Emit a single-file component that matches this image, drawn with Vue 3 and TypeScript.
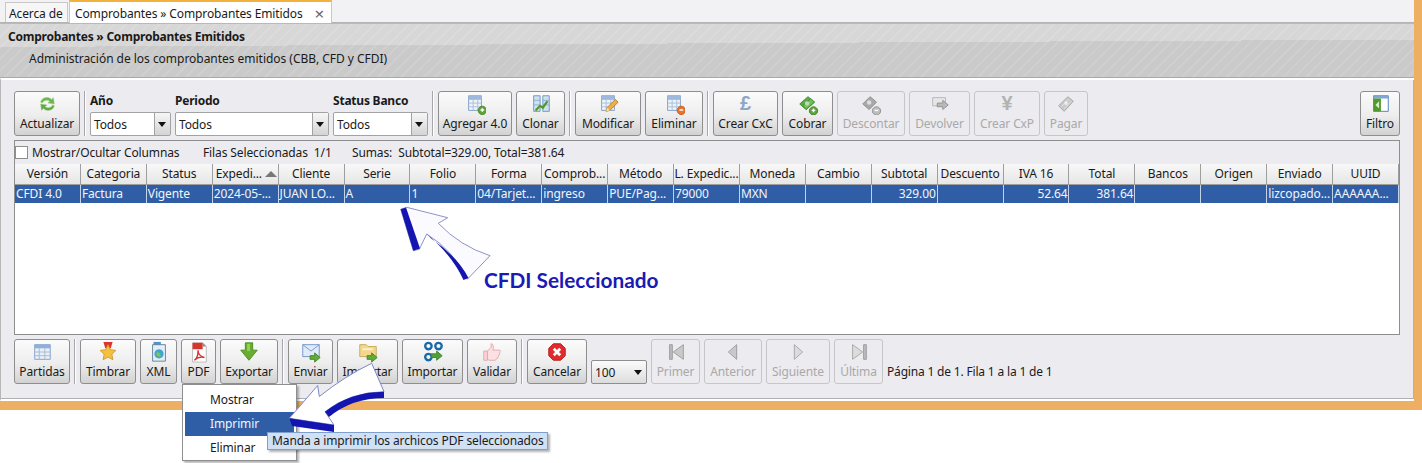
<script setup lang="ts">
interface Shape {
  d: string
  f?: string
  s?: string
  w?: number
}
interface Btn {
  label: string
  w: number
  icon?: string
  glyph?: string
  off?: boolean
}
type Item = Btn | { sep: true } | { field: string; w: number }

const table = 'M5 3h14v16H5z'
const grid = 'M5 7h14M5 11h14M5 15h14M10 7v12M15 7v12'
const tableShapes: Shape[] = [
  { d: table, f: '#eef3fa', s: '#7f9cc4' },
  { d: 'M5 3h14v4H5z', f: '#9db9dd' },
  { d: grid, s: '#a9bdd8' }
]

const icons: Record<string, Shape[]> = {
  refresh: [
    { d: 'M5 10c1-5 8-7 12-3l2-2 1 7-7-1 2-2c-3-2-7-1-8 2z', f: '#6cb552', s: '#9bd083', w: 0.5 },
    { d: 'M20 14c-1 5-8 7-12 3l-2 2-1-7 7 1-2 2c3 2 7 1 8-2z', f: '#5fa947', s: '#9bd083', w: 0.5 }
  ],
  add: [
    ...tableShapes,
    { d: 'M20 14.5a4.5 4.5 0 1 1-.01 0z', f: '#5ca53a', s: '#3f7f24' },
    { d: 'M20 16.5v4M18 18.5h4', s: '#fff', w: 1.5 }
  ],
  clone: [
    { d: 'M4 3h7v17H4z', f: '#cfe0f2', s: '#6c93c0' },
    { d: 'M14 3h7v17h-7z', f: '#cfe0f2', s: '#6c93c0' },
    { d: 'M4 8h7M4 13h7M14 8h7M14 13h7', s: '#8eaed0' },
    { d: 'M6 19l5-5 3 2 5-7', s: '#4f9a2f', w: 2.4 }
  ],
  edit: [
    ...tableShapes,
    { d: 'M10 20l1-4 9-9 3 3-9 9z', f: '#eeb044', s: '#b07c22' },
    { d: 'M10 20l1-4 3 3z', f: '#f7e3b8' }
  ],
  remove: [
    ...tableShapes,
    { d: 'M20 14.5a4.5 4.5 0 1 1-.01 0z', f: '#e8742c', s: '#bc5218' },
    { d: 'M18 18.5h4', s: '#fff', w: 1.6 }
  ],
  bills: [
    { d: 'M3 12l9-8 7 6-9 8z', f: '#5dab48', s: '#3f8530' },
    { d: 'M6 14l9-8 4 4-9 8z', f: '#74bd5d', s: '#3f8530' },
    { d: 'M11 9a2.4 2.4 0 1 1-.01 0z', f: '#b9e0a8' },
    { d: 'M18 15a4.5 4.5 0 1 1-.01 0z', f: '#5ca53a', s: '#3f7f24' },
    { d: 'M18 17v4M16 19h4', s: '#fff', w: 1.5 }
  ],
  billsOff: [
    { d: 'M3 12l8-8 7 6-8 8z', f: '#a8a8a8', s: '#8d8d8d' },
    { d: 'M10 8a2.4 2.4 0 1 1-.01 0z', f: '#dedede' },
    { d: 'M18 15a4.5 4.5 0 1 1-.01 0z', f: '#bdbdbd', s: '#8d8d8d' },
    { d: 'M16 19h4', s: '#fff', w: 1.5 }
  ],
  returnOff: [
    { d: 'M4 5h14v9H4z', f: '#e6e6e6', s: '#b5b5b5' },
    { d: 'M9 11h6V8l6 5-6 5v-3H9z', f: '#b9b9b9', s: '#8f8f8f' }
  ],
  payOff: [
    { d: 'M4 14L14 4l6 5-10 11z', f: '#c8c8c8', s: '#a5a5a5' },
    { d: 'M7 15L15 7M10 17l8-8', s: '#e6e6e6' },
    { d: 'M12 9a2 2 0 1 1-.01 0z', f: '#ededed' }
  ],
  filter: [
    { d: 'M5 3h16v17H5z', f: '#fff', s: '#4f7cb5' },
    { d: 'M5 3h16v3H5z', f: '#7fa6d4' },
    { d: 'M5 6h8v14H5z', f: '#4f9a2f' },
    { d: 'M11 9l-4 4 4 4z', f: '#d8f0c8' }
  ],
  parts: [
    { d: 'M4 4h17v16H4z', f: '#e9eff8', s: '#7f9fcc' },
    { d: 'M4 4h17v4H4z', f: '#8fb0dc' },
    { d: 'M4 12h17M4 16h17M9 8v12M15 8v12', s: '#aab8cc' }
  ],
  stamp: [
    { d: 'M7 1h10l-2 7H9z', f: '#e0322c' },
    { d: 'M12 4l2.6 5.5 6 .8-4.4 4.1 1.1 6-5.3-2.9-5.3 2.9 1.1-6-4.4-4.1 6-.8z', f: '#f5c13c', s: '#d79628' }
  ],
  xml: [
    { d: 'M6 1h8v4H6z', f: '#4f93d0' },
    { d: 'M5 4h14v18H5z', f: '#e4eef6', s: '#5f7f98' },
    { d: 'M12 9a5 5 0 1 1-.01 0z', f: '#3aa6d8' },
    { d: 'M9 13c2-2 5 1 5 4-3 1-5-1-5-4z', f: '#8cc43c' }
  ],
  pdf: [
    { d: 'M5 2h11l4 4v17H5z', f: '#fdfdfd', s: '#b9b9b9' },
    { d: 'M5 2h11v7H5z', f: '#d8342c' },
    { d: 'M16 2l4 4h-4z', f: '#8d8d8d' },
    { d: 'M7 21c3-2 4-7 4-11 0 5 3 7 7 8-4-1-8 0-11 3z', f: 'none', s: '#d8342c', w: 1.5 }
  ],
  down: [
    { d: 'M8 2h8v8h5l-9 11-9-11h5z', f: '#68ad30', s: '#4a8c22' },
    { d: 'M10 3h3v8h-3z', f: '#9ad05c' }
  ],
  send: [
    { d: 'M3 4h18v13H3z', f: '#dfeafa', s: '#6e93c8' },
    { d: 'M3 4l9 7 9-7', f: 'none', s: '#6e93c8' },
    { d: 'M11 16h5v-3l6 5-6 5v-3h-5z', f: '#62ad3a', s: '#3f8526' }
  ],
  folder: [
    { d: 'M3 4h7l2 2h9v11H3z', f: '#f3d78c', s: '#c8a858' },
    { d: 'M6 8h11v2H6z', f: '#fff3cf' },
    { d: 'M11 16h5v-3l6 5-6 5v-3h-5z', f: '#62ad3a', s: '#3f8526' }
  ],
  import: [
    { d: 'M7 2a3.5 3.5 0 1 1-.01 0zM18 2a3.5 3.5 0 1 1-.01 0zM7 14a3.5 3.5 0 1 1-.01 0z', f: 'none', s: '#1a6aa8', w: 2.6 },
    { d: 'M10 14h6v-3l6 5-6 5v-3h-6z', f: '#4fa03a', s: '#3f8526' }
  ],
  thumb: [
    { d: 'M3 11h4v10H3z', f: '#fbd4d8', s: '#e3a4ab' },
    { d: 'M7 11l4-4V3c2 0 3 2 2 7h7c2 0 1 3 0 3 1 1 0 3-1 3 0 2-1 3-2 3 0 1-1 2-2 2H9l-2-1z', f: '#fde0e2', s: '#e3a4ab' }
  ],
  cancel: [
    { d: 'M8 3h8l5 5v8l-5 5H8l-5-5V8z', f: '#e22c2c', s: '#b01c1c' },
    { d: 'M8.5 8.5l7 7M15.5 8.5l-7 7', s: '#fff', w: 3 }
  ],
  first: [
    { d: 'M5 4h3v16H5z', f: '#bdbdbd', s: '#9a9a9a' },
    { d: 'M20 4v16L9 12z', f: '#c9c9c9', s: '#9a9a9a' }
  ],
  prev: [{ d: 'M16 4v16L7 12z', f: '#c9c9c9', s: '#9a9a9a' }],
  next: [{ d: 'M8 4v16l9-8z', f: '#dcdcdc', s: '#a5a5a5' }],
  last: [
    { d: 'M5 4v16l11-8z', f: '#dcdcdc', s: '#a5a5a5' },
    { d: 'M17 4h3v16h-3z', f: '#bdbdbd', s: '#9a9a9a' }
  ]
}

const topLeft: Item[] = [
  { label: 'Actualizar', w: 66, icon: 'refresh' },
  { sep: true },
  { field: 'Año', w: 81 },
  { field: 'Periodo', w: 154 },
  { field: 'Status Banco', w: 95 },
  { sep: true },
  { label: 'Agregar 4.0', w: 74, icon: 'add' },
  { label: 'Clonar', w: 49, icon: 'clone' },
  { sep: true },
  { label: 'Modificar', w: 66, icon: 'edit' },
  { label: 'Eliminar', w: 58, icon: 'remove' },
  { sep: true },
  { label: 'Crear CxC', w: 65, glyph: '£' },
  { label: 'Cobrar', w: 51, icon: 'bills' },
  { label: 'Descontar', w: 68, icon: 'billsOff', off: true },
  { label: 'Devolver', w: 61, icon: 'returnOff', off: true },
  { label: 'Crear CxP', w: 66, glyph: '¥', off: true },
  { label: 'Pagar', w: 44, icon: 'payOff', off: true }
]

const bottomLeft: (Btn | { sep: true })[] = [
  { label: 'Partidas', w: 56, icon: 'parts' },
  { sep: true },
  { label: 'Timbrar', w: 56, icon: 'stamp' },
  { label: 'XML', w: 37, icon: 'xml' },
  { label: 'PDF', w: 35, icon: 'pdf' },
  { label: 'Exportar', w: 58, icon: 'down' },
  { sep: true },
  { label: 'Enviar', w: 45, icon: 'send' },
  { label: 'Importar', w: 61, icon: 'folder' },
  { label: 'Importar', w: 61, icon: 'import' },
  { label: 'Validar', w: 50, icon: 'thumb' },
  { sep: true },
  { label: 'Cancelar', w: 60, icon: 'cancel' }
]

const pager: Btn[] = [
  { label: 'Primer', w: 49, icon: 'first', off: true },
  { label: 'Anterior', w: 58, icon: 'prev', off: true },
  { label: 'Siguiente', w: 64, icon: 'next', off: true },
  { label: 'Última', w: 49, icon: 'last', off: true }
]

const columns = [
  'Versión', 'Categoria', 'Status', 'Expedi...', 'Cliente', 'Serie', 'Folio', 'Forma', 'Comprob...',
  'Método', 'L. Expedic...', 'Moneda', 'Cambio', 'Subtotal', 'Descuento', 'IVA 16', 'Total',
  'Bancos', 'Origen', 'Enviado', 'UUID'
]

const row = [
  'CFDI 4.0', 'Factura', 'Vigente', '2024-05-...', 'JUAN LO...', 'A', '1', '04/Tarjet...', 'ingreso',
  'PUE/Pag...', '79000', 'MXN', '', '329.00', '', '52.64', '381.64', '', '', 'lizcopado...', 'AAAAAA...'
]
const rightAligned = [13, 15, 16]

const isSep = (i: object): i is { sep: true } => 'sep' in i
const isField = (i: object): i is { field: string; w: number } => 'field' in i
const asBtn = (i: Item) => i as Btn
</script>

<template>
  <div class="page">
    <div class="window">
      <div class="tabs">
        <div class="tab">Acerca de</div>
        <div class="tab active">
          Comprobantes » Comprobantes Emitidos
          <span class="close">×</span>
        </div>
      </div>

      <div class="header">
        <div class="title">Comprobantes » Comprobantes Emitidos</div>
        <div class="subtitle">Administración de los comprobantes emitidos (CBB, CFD y CFDI)</div>
      </div>

      <div class="content">
        <div class="toolbar">
          <template v-for="(item, i) in topLeft" :key="i">
            <div v-if="isSep(item)" class="sep"></div>
            <div v-else-if="isField(item)" class="field" :style="{ width: item.w + 'px' }">
              <label>{{ item.field }}</label>
              <div class="select">
                <span>Todos</span>
                <i class="drop"></i>
              </div>
            </div>
            <button v-else class="btn" :class="{ off: asBtn(item).off }" :style="{ width: asBtn(item).w + 'px' }">
              <span v-if="asBtn(item).glyph" class="glyph">{{ asBtn(item).glyph }}</span>
              <svg v-else viewBox="0 0 24 24" class="icon">
                <path v-for="(p, k) in icons[asBtn(item).icon!]" :key="k" :d="p.d" :fill="p.f ?? 'none'" :stroke="p.s ?? 'none'" :stroke-width="p.w ?? 1" />
              </svg>
              <span>{{ asBtn(item).label }}</span>
            </button>
          </template>
          <button class="btn filtro">
            <svg viewBox="0 0 24 24" class="icon">
              <path v-for="(p, k) in icons.filter" :key="k" :d="p.d" :fill="p.f ?? 'none'" :stroke="p.s ?? 'none'" />
            </svg>
            <span>Filtro</span>
          </button>
        </div>

        <div class="grid-panel">
          <div class="grid-top">
            <span class="check"></span>
            <span class="show">Mostrar/Ocultar Columnas</span>
            <span class="rows">Filas Seleccionadas&nbsp; 1/1</span>
            <span class="sums">Sumas:&nbsp; Subtotal=329.00, Total=381.64</span>
          </div>
          <div class="cols head">
            <div v-for="c in columns" :key="c" class="hcell" :class="{ sorted: c === 'Expedi...' }">
              {{ c }}
              <i v-if="c === 'Expedi...'" class="sort"></i>
            </div>
          </div>
          <div class="cols sel">
            <div v-for="(v, i) in row" :key="i" class="cell" :class="{ right: rightAligned.includes(i) }">{{ v }}</div>
          </div>
        </div>

        <div class="toolbar bottom">
          <template v-for="(item, i) in bottomLeft" :key="i">
            <div v-if="isSep(item)" class="sep"></div>
            <button v-else class="btn" :style="{ width: item.w + 'px' }">
              <svg viewBox="0 0 24 24" class="icon">
                <path v-for="(p, k) in icons[item.icon!]" :key="k" :d="p.d" :fill="p.f ?? 'none'" :stroke="p.s ?? 'none'" :stroke-width="p.w ?? 1" />
              </svg>
              <span>{{ item.label }}</span>
            </button>
          </template>
          <div class="select small">
            <span>100</span>
            <i class="drop plain"></i>
          </div>
          <button v-for="b in pager" :key="b.label" class="btn off" :style="{ width: b.w + 'px' }">
            <svg viewBox="0 0 24 24" class="icon">
              <path v-for="(p, k) in icons[b.icon!]" :key="k" :d="p.d" :fill="p.f ?? 'none'" :stroke="p.s ?? 'none'" />
            </svg>
            <span>{{ b.label }}</span>
          </button>
          <span class="page-info">Página 1 de 1. Fila 1 a la 1 de 1</span>
        </div>
      </div>
    </div>

    <div class="menu">
      <div class="menu-item">Mostrar</div>
      <div class="menu-item hover">Imprimir</div>
      <div class="menu-item">Eliminar</div>
    </div>
    <div class="tooltip">Manda a imprimir los archicos PDF seleccionados</div>

    <svg class="marks" viewBox="0 0 1422 463">
      <path d="M406.7 207.3 447.7 217.7 438.3 223.3Q460 246 490 255.7L467.3 279.3Q453 250 426.7 234L419.3 249.3 413.3 250.7 400.7 209.3Z" fill="#fbfbff" stroke="#8d93c8" />
      <path d="M400.7 209.3 406 207.5 420 248.5 413.3 250.7Z" fill="#1414b0" />
      <path d="M426.7 234 431 238.5Q457 256 468.5 278L463.5 280Q452 255 426.7 234Z" fill="#1414b0" />
      <path d="M289.3 418.3 317.7 385.5 319.3 396.5Q345 376 371.7 363.3L384 391.7Q350 392 325 411.7L334 425Z" fill="#fff" stroke="#7f88c8" />
      <path d="M384 391.7V398Q352 398 329 417L325 411.7Q350 392 384 391.7Z" fill="#1414b0" />
      <path d="M289.3 418.3 334 425V432L292 426Z" fill="#1414b0" />
    </svg>
    <div class="note">CFDI Seleccionado</div>
  </div>
</template>

<style>
html,
body {
  margin: 0;
  background: #fff;
}
</style>

<style scoped>
.page {
  position: relative;
  width: 1422px;
  height: 463px;
  overflow: hidden;
  background: #fff;
  font-family: "Noto Sans", "Liberation Sans", sans-serif;
  font-size: 12px;
  letter-spacing: -0.12px;
  color: #1a1a1a;
}

.window {
  box-sizing: border-box;
  height: 410px;
  padding: 0 8px 9px 0;
  background: #eeaf62;
  display: flex;
  flex-direction: column;
}

.tabs {
  box-sizing: border-box;
  height: 23px;
  flex: none;
  display: flex;
  align-items: flex-end;
  padding-left: 5px;
  gap: 1px;
  background: #f2f1f4;
  border-bottom: 1px solid #b4b4b4;
}

.tab {
  box-sizing: border-box;
  height: 20px;
  width: 63px;
  padding: 2px 0 0 3px;
  background: #f6f6f6;
  border: 1px solid #c8c8c8;
  border-bottom: 0;
}

.tab.active {
  height: 23px;
  width: 263px;
  margin-bottom: -1px;
  padding: 3px 0 0 5px;
  background: #fff;
  border-top: 2px solid #f4b13c;
  position: relative;
}

.close {
  position: absolute;
  right: 7px;
  top: 0;
  font-size: 17px;
  color: #666;
}

.header {
  height: 55px;
  flex: none;
  box-sizing: border-box;
  border-top: 1px solid #b9b9b9;
  border-bottom: 1px solid #a8a8a8;
  background-color: #cbcbcb;
  background-image:
    repeating-linear-gradient(135deg, rgba(255, 255, 255, 0.1) 0 2px, transparent 2px 8px),
    linear-gradient(179.7deg, #d7d7d7 0 23px, #cacaca 23px);
}

.title {
  height: 21px;
  box-sizing: border-box;
  padding: 4px 0 0 8px;
  line-height: 18px;
  font-weight: 700;
  letter-spacing: -0.22px;
}

.subtitle {
  padding: 5px 0 0 29px;
  letter-spacing: -0.03px;
}

.content {
  flex: 1;
  background: #ecebef;
  border-top: 2px solid #fff;
  border-left: 1px solid #b8b8b8;
  border-bottom: 2px solid #fff;
  box-shadow: inset -1px -1px 0 #b0b0b0;
  padding: 11px 14px 0 13px;
  min-height: 0;
}

.toolbar {
  display: flex;
  gap: 4px;
  height: 45px;
  align-items: flex-end;
}

.toolbar.bottom {
  margin-top: 4px;
}

.sep {
  width: 2px;
  height: 45px;
  background: linear-gradient(90deg, #a6a6a6 50%, #fff 50%);
}

.btn {
  box-sizing: border-box;
  height: 45px;
  padding: 0 0 3px;
  display: flex;
  flex-direction: column;
  align-items: center;
  justify-content: space-between;
  border: 1px solid #8e8e8e;
  border-radius: 3px;
  background: linear-gradient(#fbfbfb, #ededed 55%, #d2d2d2);
  font: inherit;
  letter-spacing: inherit;
  color: #1a1a1a;
  white-space: nowrap;
  overflow: visible;
}

.btn.off {
  border-color: #c6c6c6;
  background: #ecebef;
  color: #a9a9a9;
}

.icon {
  width: 22px;
  height: 22px;
  margin-top: 1px;
  flex: none;
}

.glyph {
  height: 23px;
  font-family: "Liberation Sans", sans-serif;
  font-size: 20px;
  line-height: 23px;
  font-weight: 700;
  color: #8ea6c6;
}

.btn.off .glyph {
  color: #b2b2b2;
}

.filtro {
  width: 40px;
  margin-left: auto;
}

.field {
  display: flex;
  flex-direction: column;
  justify-content: space-between;
  height: 45px;
}

.field label {
  font-weight: 700;
  line-height: 19px;
  letter-spacing: -0.22px;
}

.select {
  box-sizing: border-box;
  height: 24px;
  display: flex;
  align-items: center;
  justify-content: space-between;
  padding-left: 3px;
  background: #fff;
  border: 1px solid #a2a2a2;
  border-radius: 2px;
}

.select.small {
  width: 56px;
  flex: none;
  background: linear-gradient(#fbfbfb, #dcdcdc);
  border-color: #8e8e8e;
}

.drop {
  position: relative;
  width: 15px;
  height: 22px;
  border-left: 1px solid #a2a2a2;
  background: linear-gradient(#f6f6f6, #d4d4d4);
}

.drop::after {
  content: "";
  position: absolute;
  left: 3px;
  top: 9px;
  border: 4px solid transparent;
  border-top: 5px solid #111;
  border-bottom: 0;
}

.drop.plain {
  border-left: 0;
  background: none;
}

.grid-panel {
  box-sizing: border-box;
  height: 195px;
  margin-top: 4px;
  background: #fff;
  border: 1px solid #8e8e8e;
}

.grid-top {
  box-sizing: border-box;
  height: 23px;
  display: flex;
  align-items: center;
  background: #ecebef;
}

.check {
  box-sizing: border-box;
  width: 13px;
  height: 13px;
  background: #fff;
  border: 1px solid #8e8e8e;
  margin-right: 4px;
}

.show {
  width: 171px;
}

.rows {
  width: 149px;
}

.cols {
  display: grid;
  grid-template-columns: repeat(21, 1fr);
}

.head {
  height: 21px;
  background: #fff;
}

.hcell {
  position: relative;
  box-sizing: border-box;
  text-align: center;
  line-height: 20px;
  white-space: nowrap;
  overflow: hidden;
  background: linear-gradient(#f8f8f8, #e6e6e6);
  border-right: 1px solid #9e9e9e;
  border-bottom: 1px solid #9e9e9e;
}

.hcell.sorted {
  text-align: left;
  padding-left: 3px;
}

.sort {
  position: absolute;
  right: 1px;
  top: 7px;
  border: 6px solid transparent;
  border-bottom: 6px solid #777;
  border-top: 0;
}

.sel {
  height: 18px;
  background: #2f5ea6;
}

.cell {
  box-sizing: border-box;
  padding: 0 1px;
  color: #f2f5fb;
  line-height: 17px;
  white-space: nowrap;
  overflow: hidden;
  border-right: 1px solid #c3d2e8;
}

.cell.right {
  text-align: right;
}

.page-info {
  align-self: flex-end;
  line-height: 24px;
  letter-spacing: -0.18px;
}

.menu {
  position: absolute;
  left: 182px;
  top: 384px;
  box-sizing: border-box;
  width: 115px;
  height: 77px;
  padding: 3px 2px;
  background: #fff;
  border: 1px solid #8e8e8e;
  box-shadow: 2px 2px 2px rgba(0, 0, 0, 0.3);
}

.menu-item {
  height: 24px;
  line-height: 24px;
  padding-left: 25px;
}

.menu-item.hover {
  background: #2f5ea6;
  color: #f2f5fb;
}

.tooltip {
  position: absolute;
  left: 267px;
  top: 432px;
  box-sizing: border-box;
  width: 281px;
  height: 18px;
  padding-left: 4px;
  line-height: 16px;
  white-space: nowrap;
  background: #d0e0f5;
  border: 1px solid #7f9fcc;
  box-shadow: 2px 2px 2px rgba(0, 0, 0, 0.3);
}

.marks {
  position: absolute;
  left: 0;
  top: 0;
  width: 1422px;
  height: 463px;
  pointer-events: none;
}

.note {
  position: absolute;
  left: 484px;
  top: 266px;
  font-family: Lato, "Open Sans", sans-serif;
  font-size: 20.8px;
  font-weight: 700;
  letter-spacing: 0;
  line-height: 28px;
  color: #1a1ab4;
}
</style>
